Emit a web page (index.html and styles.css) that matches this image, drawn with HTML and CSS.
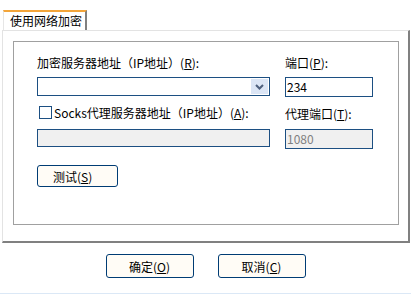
FILE: index.html
```html
<!DOCTYPE html>
<html>
<head>
    <meta charset="UTF-8">
    <title>使用网络加密</title>
    <link rel="stylesheet" href="styles.css">
</head>
<body>
    <div class="dialog">
        <div class="tabs">
            <div class="tab">使用网络加密</div>
        </div>
        <div class="panel">
            <div class="group">
                <div class="fields">
                    <label class="lbl">加密服务器地址（IP地址）(<u>R</u>):</label>
                    <label class="lbl">端口(<u>P</u>):</label>
                    <div class="combo">
                        <span class="combo-value"></span>
                        <span class="combo-btn">
                            <svg width="9" height="6" viewBox="0 0 9 6"><path d="M1 1 L4.5 4.5 L8 1" fill="none" stroke="#4d5f7d" stroke-width="2"/></svg>
                        </span>
                    </div>
                    <div class="input">234</div>
                    <label class="lbl check-lbl"><span class="check"></span>Socks代理服务器地址（IP地址）(<u>A</u>):</label>
                    <label class="lbl check-row">代理端口(<u>T</u>):</label>
                    <div class="input disabled short"></div>
                    <div class="input disabled muted">1080</div>
                </div>
                <button class="btn test-btn">测试(<u>S</u>)</button>
            </div>
        </div>
        <div class="actions">
            <button class="btn">确定(<u>O</u>)</button>
            <button class="btn">取消(<u>C</u>)</button>
        </div>
        <div class="bottom-line"></div>
    </div>
</body>
</html>
```

FILE: styles.css
```css
body {
    margin: 0;
    background: #ffffff;
    font-family: "Noto Sans CJK SC", "DejaVu Sans", sans-serif;
    font-size: 12px;
    color: #000000;
}

.dialog {
    width: 411px;
    height: 294px;
    overflow: hidden;
}

.tabs {
    display: flex;
    padding: 10px 0 0 3px;
    height: 20px;
}

.tab {
    position: relative;
    z-index: 1;
    width: 84px;
    height: 20px;
    line-height: 20px;
    padding-left: 6px;
    box-sizing: border-box;
    background: #ffffff;
    border-top: 2px solid #f3a53a;
    border-left: 1px solid #e6e6e6;
    border-right: 2px solid #808080;
    margin-bottom: -1px;
    line-height: 17px;
}

.panel {
    margin-left: 2px;
    width: 408px;
    box-sizing: border-box;
    border-top: 1px solid #e3e3e3;
    border-left: 1px solid #e3e3e3;
    border-right: 2px solid #808080;
    border-bottom: 2px solid #808080;
    padding: 10px 9px 16px 10px;
}

.group {
    border: 1px solid #a0a0a0;
    height: 184px;
    box-sizing: border-box;
    padding: 14px 0 0 23px;
}

.fields {
    display: grid;
    grid-template-columns: 233px 88px;
    column-gap: 15px;
    grid-template-rows: 14px 20px 14px 20px;
    row-gap: 7px;
}

.fields .lbl:nth-child(5),
.fields .lbl:nth-child(6) {
    margin-top: 3px;
}

.fields .input:nth-child(7),
.fields .input:nth-child(8) {
    margin-top: 4px;
}

.lbl {
    line-height: 14px;
    white-space: nowrap;
}

.check-lbl {
    display: flex;
    align-items: center;
    margin-left: 2px;
}

.check {
    width: 11px;
    height: 11px;
    border: 1px solid #1c4f82;
    background: #ffffff;
    margin-right: 2px;
}

.combo {
    display: flex;
    justify-content: flex-end;
    align-items: center;
    border: 1px solid #1c4f82;
    height: 19px;
    box-sizing: border-box;
    padding-right: 1px;
}

.combo-btn {
    width: 17px;
    height: 15px;
    background: #dbe5f5;
    display: flex;
    align-items: center;
    justify-content: center;
}

.input {
    border: 1px solid #1c4f82;
    height: 20px;
    box-sizing: border-box;
    padding-left: 1px;
    line-height: 17px;
}

.input.short {
    height: 18px;
}

.input.disabled {
    background: #f0f0f0;
}

.input.muted {
    color: #808080;
}

.btn {
    font-family: "Noto Sans CJK SC", "DejaVu Sans", sans-serif;
    font-size: 12px;
    color: #000000;
    background: #fffcf6;
    border: 1px solid #003c74;
    border-radius: 3px;
    width: 88px;
    height: 24px;
    padding: 0;
}

.test-btn {
    display: block;
    margin-top: 20px;
    width: 81px;
    height: 22px;
    text-align: left;
    padding-left: 15px;
}

.actions {
    display: flex;
    justify-content: center;
    gap: 24px;
    margin-top: 11px;
}

.bottom-line {
    margin-top: 15px;
    height: 2px;
    background: #dbe8f6;
}
```
